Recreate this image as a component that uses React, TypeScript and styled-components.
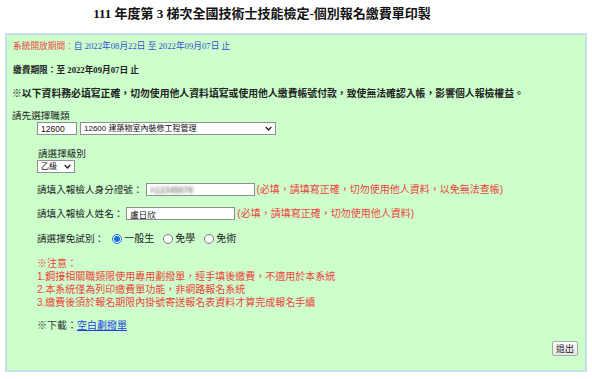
import React from 'react';
import styled, { createGlobalStyle } from 'styled-components';

const GlobalStyle = createGlobalStyle`
  html, body {
    margin: 0;
    padding: 0;
    background: #ffffff;
  }
  body {
    font-family: 'Liberation Serif', 'Noto Sans CJK TC', serif;
    color: #222;
  }
`;

const notes = [
  '1.鋼接相關職類限使用專用劃撥單，經手填後繳費，不適用於本系統',
  '2.本系統僅為列印繳費單功能，非網路報名系統',
  '3.繳費後須於報名期限內掛號寄送報名表資料才算完成報名手續',
];

const exemptOptions = ['一般生', '免學', '免術'];

export default function App() {
  return (
    <Page>
      <GlobalStyle />
      <Title>111 年度第 3 梯次全國技術士技能檢定-個別報名繳費單印製</Title>

      <Panel>
        <Line>
          <Red>系統開放期間：</Red>
          <Blue>自 2022年08月22日 至 2022年09月07日 止</Blue>
        </Line>

        <Line $top={11} $bold>
          繳費期限：至 2022年09月07日 止
        </Line>

        <Notice>※以下資料務必填寫正確，切勿使用他人資料填寫或使用他人繳費帳號付款，致使無法確認入帳，影響個人報檢權益。</Notice>

        <Label $top={9}>請先選擇職類</Label>
        <FieldRow>
          <CodeInput defaultValue="12600" />
          <SelectBox $width={196}>
            <span>12600 建築物室內裝修工程管理</span>
            <Chevron />
          </SelectBox>
        </FieldRow>

        <Label $top={12} $indent>
          請選擇級別
        </Label>
        <FieldRow>
          <SelectBox $width={38}>
            <span>乙級</span>
            <Chevron />
          </SelectBox>
        </FieldRow>

        <FieldRow $top={10}>
          <Label>請填入報檢人身分證號：</Label>
          <TextInput $blurred defaultValue="A12345678" />
          <Hint>(必填，請填寫正確，切勿使用他人資料，以免無法查帳)</Hint>
        </FieldRow>

        <FieldRow $top={11}>
          <Label>請填入報檢人姓名：</Label>
          <TextInput defaultValue="盧日欣" />
          <Hint>(必填，請填寫正確，切勿使用他人資料)</Hint>
        </FieldRow>

        <FieldRow $top={12}>
          <Label>請選擇免試別：</Label>
          <RadioGroup>
            {exemptOptions.map((opt, i) => (
              <RadioLabel key={opt}>
                <Radio type="radio" name="exempt" defaultChecked={i === 0} />
                {opt}
              </RadioLabel>
            ))}
          </RadioGroup>
        </FieldRow>

        <NoteBlock>
          <div>※注意：</div>
          {notes.map((n) => (
            <div key={n}>{n}</div>
          ))}
        </NoteBlock>

        <Download>
          ※下載：<a href="#">空白劃撥單</a>
        </Download>

        <ButtonRow>
          <ExitButton type="button">退出</ExitButton>
        </ButtonRow>
      </Panel>
    </Page>
  );
}

function Chevron() {
  return (
    <ChevronSvg viewBox="0 0 10 6" width={7} height={5}>
      <path d="M1 1 L5 5 L9 1" fill="none" stroke="#222" strokeWidth="2" />
    </ChevronSvg>
  );
}

const Page = styled.div`
  width: 592px;
  height: 379px;
  overflow: hidden;
`;

const Title = styled.h1`
  margin: 0;
  padding-top: 6px;
  width: 524px;
  height: 33px;
  text-align: center;
  font-size: 13px;
  line-height: 16px;
  font-weight: bold;
  font-family: 'Liberation Serif', 'Noto Sans CJK TC', serif;
  color: #111;
  box-sizing: border-box;
`;

const Panel = styled.div`
  margin: 0 5px;
  width: 582px;
  height: 339px;
  box-sizing: border-box;
  border: 2px solid #c6dfec;
  background: #ccffcc;
  padding: 5px 7px 0 5px;
  display: flex;
  flex-direction: column;
  font-size: 8.7px;
  line-height: 13px;
`;

const Line = styled.div<{ $top?: number; $bold?: boolean }>`
  margin-top: ${(p) => p.$top ?? 0}px;
  padding-left: 1px;
  font-weight: ${(p) => (p.$bold ? 'bold' : 'normal')};
  white-space: nowrap;
`;

const Red = styled.span`
  color: #f0413c;
`;

const Blue = styled.span`
  color: #2f4fd0;
`;

const Notice = styled.div`
  margin-top: 10px;
  font-size: 9.85px;
  font-weight: bold;
  white-space: nowrap;
`;

const Label = styled.div<{ $top?: number; $indent?: boolean }>`
  margin-top: ${(p) => p.$top ?? 0}px;
  margin-left: ${(p) => (p.$indent ? 26 : 0)}px;
  font-family: 'Liberation Sans', 'Noto Sans CJK TC', sans-serif;
  font-size: 9.6px;
  white-space: nowrap;
  color: #222;
`;

const FieldRow = styled.div<{ $top?: number }>`
  margin-top: ${(p) => p.$top ?? 0}px;
  padding-left: 25px;
  display: flex;
  align-items: center;
  gap: 3px;
  height: 13px;
  white-space: nowrap;
`;

const CodeInput = styled.input`
  width: 40px;
  height: 13px;
  box-sizing: border-box;
  border: 1px solid #8f8f8f;
  padding: 0 3px;
  font-family: 'Liberation Sans', sans-serif;
  font-size: 8.5px;
  background: #fff;
  color: #111;
  outline: none;
`;

const SelectBox = styled.div<{ $width: number }>`
  width: ${(p) => p.$width}px;
  height: 13px;
  box-sizing: border-box;
  border: 1px solid #8f8f8f;
  background: #fff;
  display: flex;
  align-items: center;
  justify-content: space-between;
  padding: 0 3px 0 3px;
  font-family: 'Liberation Sans', 'Noto Sans CJK TC', sans-serif;
  font-size: 8px;
  color: #111;
`;

const ChevronSvg = styled.svg`
  flex: none;
`;

const TextInput = styled.input<{ $blurred?: boolean }>`
  width: 109px;
  height: 13px;
  box-sizing: border-box;
  border: 1px solid #8f8f8f;
  padding: 0 3px;
  font-family: 'Liberation Sans', 'Noto Sans CJK TC', sans-serif;
  font-size: 8.5px;
  background: #fff;
  outline: none;
  color: ${(p) => (p.$blurred ? 'transparent' : '#111')};
  text-shadow: ${(p) => (p.$blurred ? '0 0 3px #555' : 'none')};
`;

const Hint = styled.span`
  font-family: 'Liberation Sans', 'Noto Sans CJK TC', sans-serif;
  font-size: 10px;
  color: #f0413c;
  margin-left: -1px;
`;

const RadioGroup = styled.div`
  display: flex;
  align-items: center;
  gap: 9px;
  margin-left: 5px;
`;

const RadioLabel = styled.label`
  display: flex;
  align-items: center;
  gap: 2px;
  font-family: 'Liberation Sans', 'Noto Sans CJK TC', sans-serif;
  font-size: 10px;
  color: #222;
`;

const Radio = styled.input`
  width: 10px;
  height: 10px;
  margin: 0;
  accent-color: #1a6fe0;
`;

const NoteBlock = styled.div`
  margin-top: 12px;
  padding-left: 25px;
  font-family: 'Liberation Sans', 'Noto Sans CJK TC', sans-serif;
  font-size: 10px;
  line-height: 13px;
  color: #f0413c;
  white-space: nowrap;
`;

const Download = styled.div`
  margin-top: 10px;
  padding-left: 25px;
  font-family: 'Liberation Sans', 'Noto Sans CJK TC', sans-serif;
  font-size: 10px;
  color: #333;

  a {
    color: #1c3fe0;
    text-decoration: underline;
  }
`;

const ButtonRow = styled.div`
  margin-top: 9px;
  display: flex;
  justify-content: flex-end;
`;

const ExitButton = styled.button`
  width: 26px;
  height: 15px;
  padding: 0;
  box-sizing: border-box;
  border: 1px solid #a9a9a9;
  border-radius: 2px;
  background: linear-gradient(#fafafa, #e6e6e6);
  font-family: 'Liberation Sans', 'Noto Sans CJK TC', sans-serif;
  font-size: 9px;
  color: #222;
`;
